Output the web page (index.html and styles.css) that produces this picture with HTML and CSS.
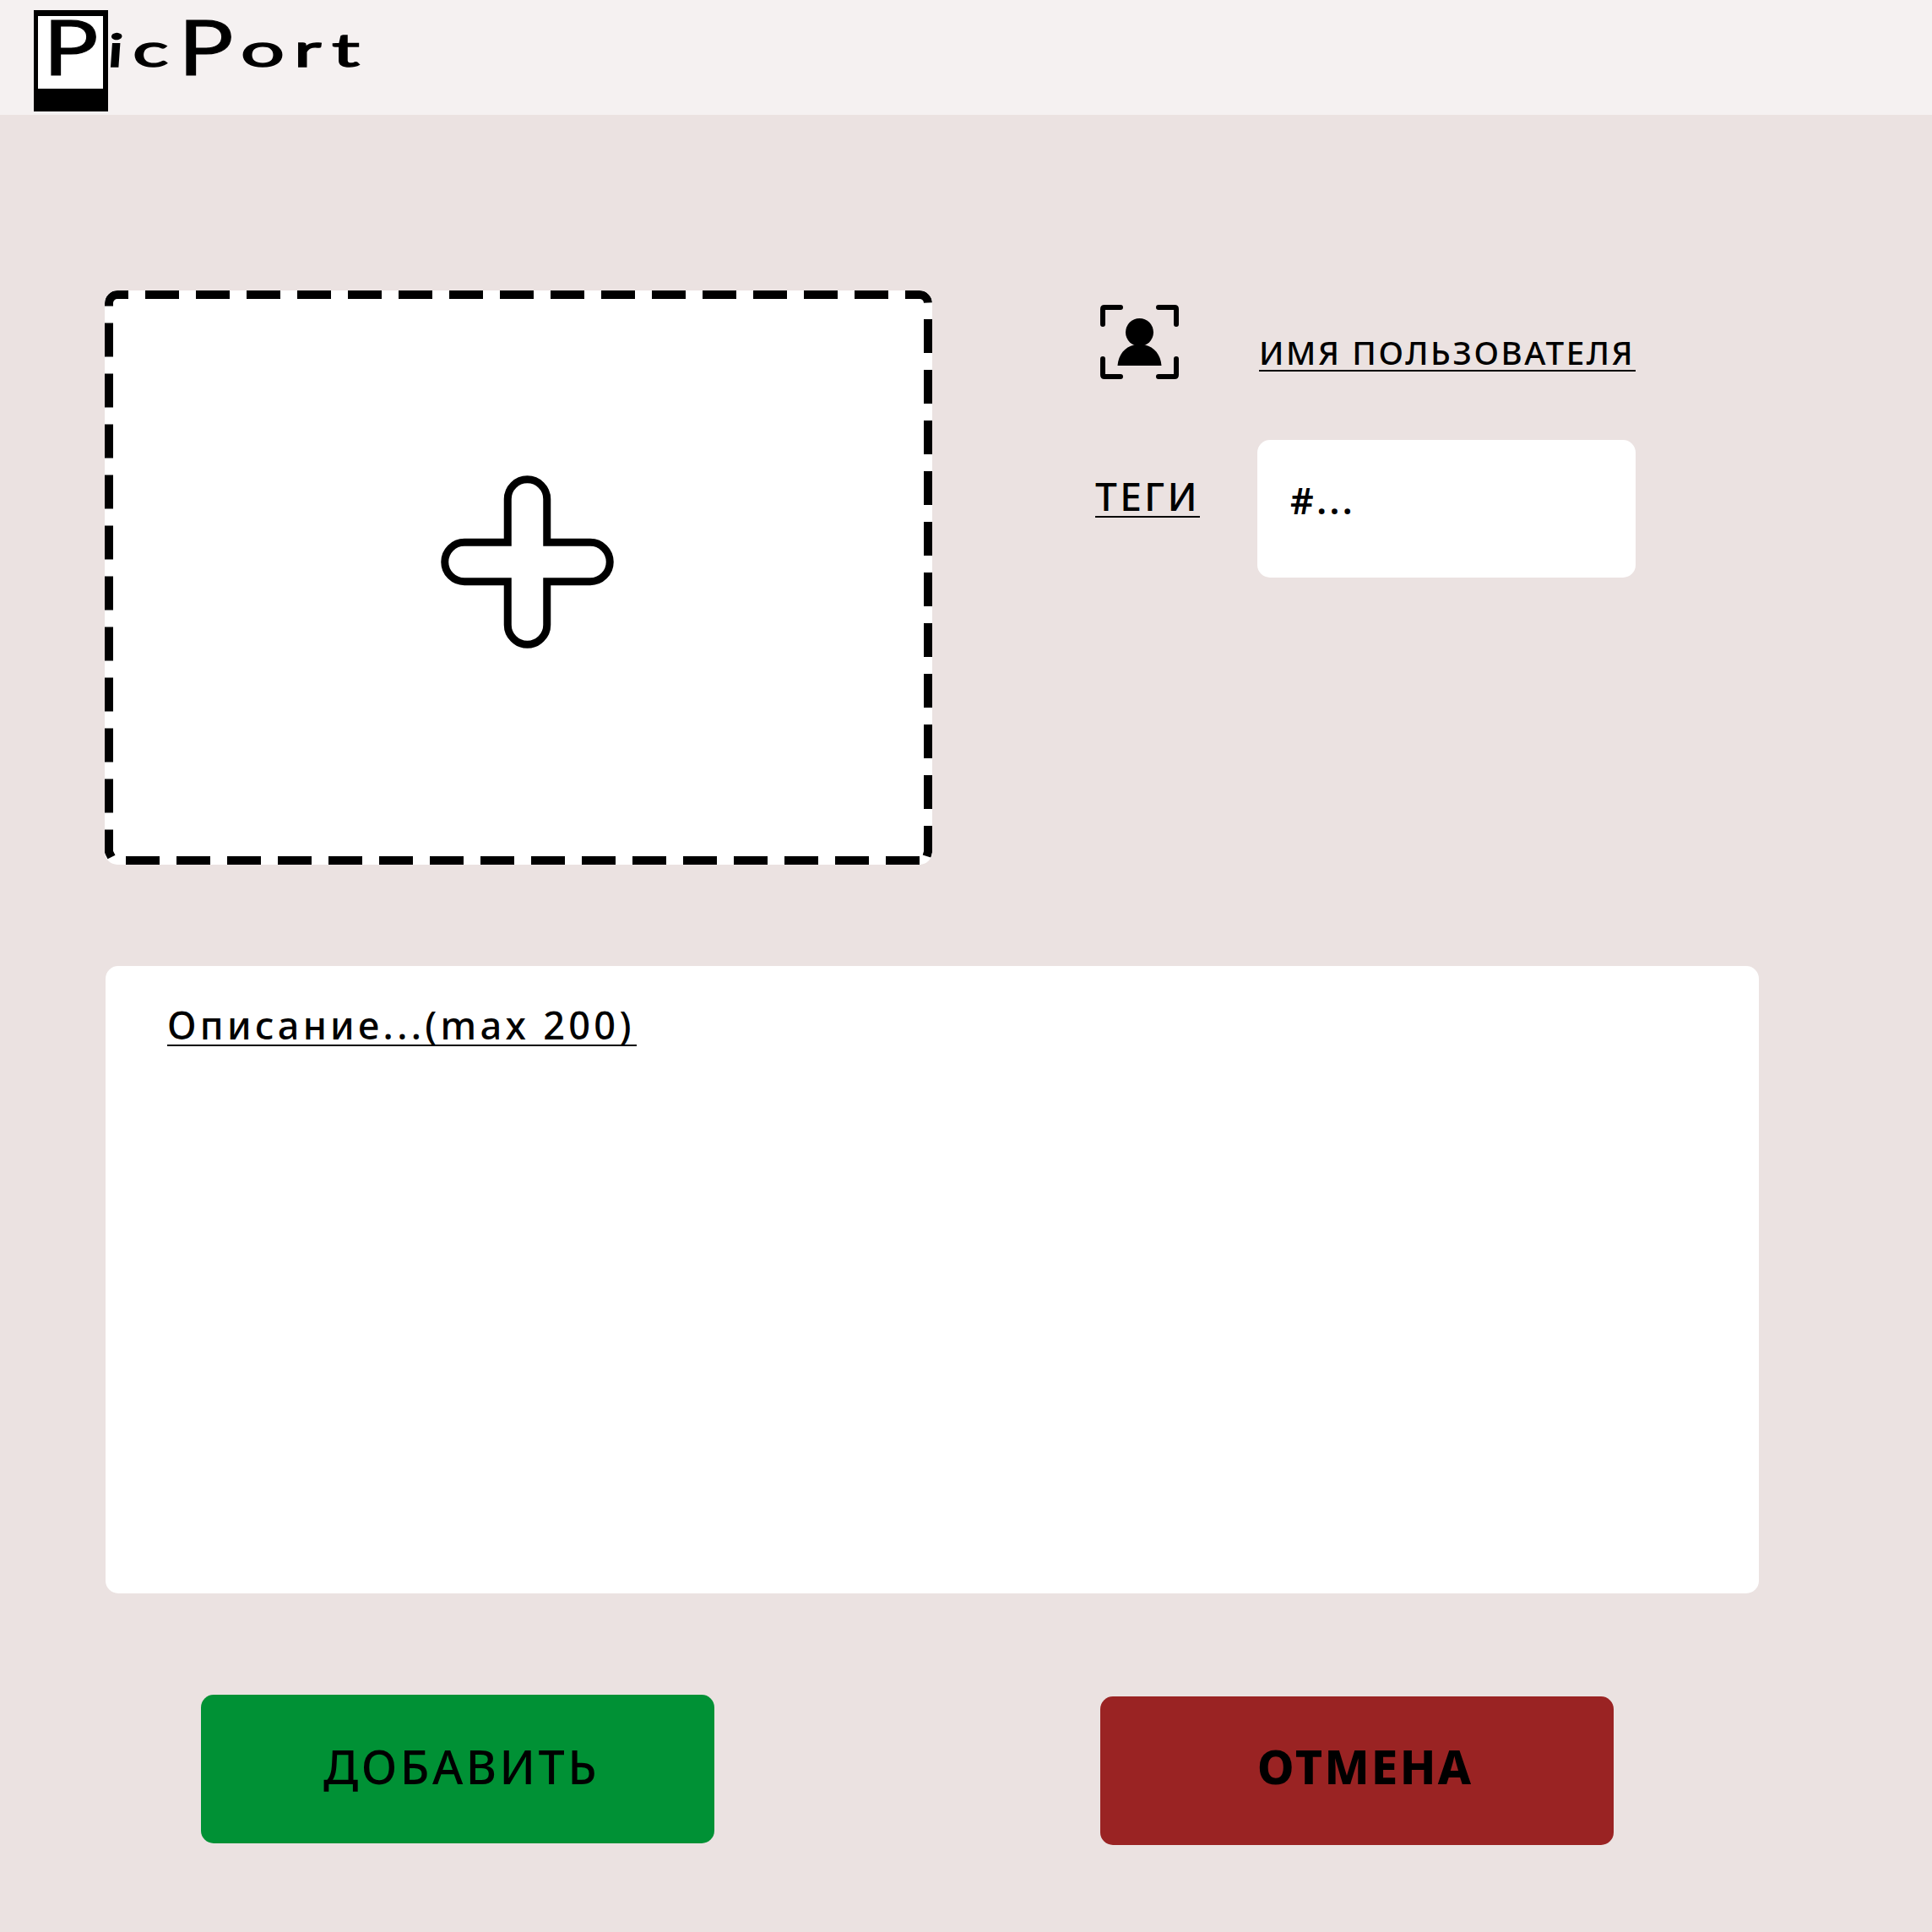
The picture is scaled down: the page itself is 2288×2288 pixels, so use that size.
FILE: index.html
```
<!DOCTYPE html>
<html lang="ru">
<head>
<meta charset="utf-8">
<title>PicPort</title>
<link rel="stylesheet" href="styles.css">
</head>
<body>
<header class="header">
  <svg class="logo" width="400" height="124" viewBox="0 0 400 124" role="img" aria-label="PicPort">
    <rect width="88" height="120"/>
    <rect x="5" y="7" width="77" height="86" fill="#fff"/>
    <text class="logo-cap" transform="translate(11 77) scale(1.2 1)">P</text>
    <text class="logo-low" transform="translate(86 67) skewX(-4) scale(1.5 1)">i</text>
    <text class="logo-low" transform="translate(117 67) scale(1.65 1)">c</text>
    <text class="logo-cap" transform="translate(171 77) scale(1.2 1)">P</text>
    <text class="logo-low" transform="translate(245 67) scale(1.7 1)">o</text>
    <text class="logo-low" transform="translate(308 67) scale(1.65 1)">r</text>
    <text class="logo-low" transform="translate(353 67) scale(1.7 1)">t</text>
  </svg>
</header>
<main class="page">
  <section class="top">
    <div class="upload">
      <svg width="980" height="680" viewBox="0 0 980 680" fill="none" stroke="#000" stroke-width="10">
        <path stroke-dasharray="40 20" d="M48 5H928"/>
        <path stroke-dasharray="40 20" d="M975 34V614"/>
        <path stroke-dasharray="40 20" d="M25 675H965"/>
        <path stroke-dasharray="40 20" d="M5 38.5V618.5"/>
        <path d="M5 18.5V15A10 10 0 0 1 15 5H28M948 5H965A10 10 0 0 1 975 14.5M975 634V665L973.500 670M5 638.500V665L8 671"/>
        <path stroke-width="9" d="M477.250 298.250V247A23.250 23.250 0 0 1 523.750 247V298.250H575A23.250 23.250 0 0 1 575 344.750H523.750V396A23.250 23.250 0 0 1 477.250 396V344.750H426A23.250 23.250 0 0 1 426 298.250Z"/>
      </svg>
    </div>
    <div class="meta">
      <svg class="user-icon" width="94" height="90" viewBox="0 0 94 90">
        <path fill="none" stroke="#000" stroke-width="6" stroke-linecap="round" stroke-linejoin="round" d="M3 24V6Q3 4 5 4H24M69 4H88Q90 4 90 6V24M90 65V84Q90 86 88 86H69M24 86H5Q3 86 3 84V65"/>
        <circle cx="46.500" cy="33.500" r="16.500"/>
        <path d="M20.500 73C21.500 60 29 51 40 48.500H53C64 51 71.500 60 72.500 73Z"/>
      </svg>
      <div class="line user-name">ИМЯ ПОЛЬЗОВАТЕЛЯ</div>
      <div class="line tags-label">ТЕГИ</div>
      <div class="tags-field">#...</div>
    </div>
  </section>
  <section class="description"><div class="line desc-text">Описание...(max 200)</div></section>
  <section class="actions">
    <button class="btn add">ДОБАВИТЬ</button>
    <button class="btn cancel">ОТМЕНА</button>
  </section>
</main>
</body>
</html>
```
FILE: styles.css
```
* { box-sizing: border-box; }
body {
  margin: 0;
  min-height: 2288px;
  background: #ebe2e1;
  color: #000;
  font-family: "Noto Sans", "Open Sans", sans-serif;
  font-weight: 500;
}
svg { display: block; }
.header { height: 136px; padding: 12px 0 0 40px; background: #f5f1f1; }
.logo { overflow: visible; }
.logo-cap { font: 400 91px Lato, sans-serif; stroke: #000; stroke-width: 1px; }
.logo-low { font: 400 54px Lato, sans-serif; stroke: #000; stroke-width: 1.5px; }
.page { padding: 208px 0 0 124px; }
.top { display: flex; gap: 193px; }
.upload { width: 980px; height: 680px; background: #fff; border-radius: 15px; overflow: hidden; }
.meta {
  display: grid;
  grid-template-columns: 192px 448px;
  grid-template-rows: 177px 163px;
  align-content: start;
}
.line { white-space: nowrap; border-bottom: 2px solid #000; }
.user-icon { margin: 16px 0 0 6px; }
.user-name { width: 446px; height: 42px; margin: 54px 0 0 2px; font-size: 38.5px; line-height: 39px; letter-spacing: 2.6px; }
.tags-label { width: 124px; height: 48px; margin-top: 44px; font-size: 46px; line-height: 44px; letter-spacing: 3.3px; }
.tags-field { height: 163px; padding: 44px 0 0 39px; border-radius: 15px; background: #fff; font-size: 43px; font-weight: 600; line-height: 56px; letter-spacing: 3.4px; }
.description { width: 1958px; height: 743px; margin: 120px 0 0 1px; padding: 42px 0 0 73px; border-radius: 15px; background: #fff; }
.desc-text { width: 556px; height: 53px; font-size: 45px; line-height: 56px; letter-spacing: 4.3px; }
.actions { display: flex; gap: 457px; padding: 120px 0 0 114px; }
.btn { width: 608px; height: 176px; padding: 0 0 6px; border: 0; border-radius: 15px; color: #000; font: 500 55.5px/80px "Noto Sans", "Open Sans", sans-serif; text-align: left; }
.add { padding-left: 145px; background: #009135; letter-spacing: 3.5px; }
.cancel { margin-top: 2px; padding-bottom: 10px; padding-left: 186px; background: #9a2323; font-weight: 800; letter-spacing: 2.4px; }
```
